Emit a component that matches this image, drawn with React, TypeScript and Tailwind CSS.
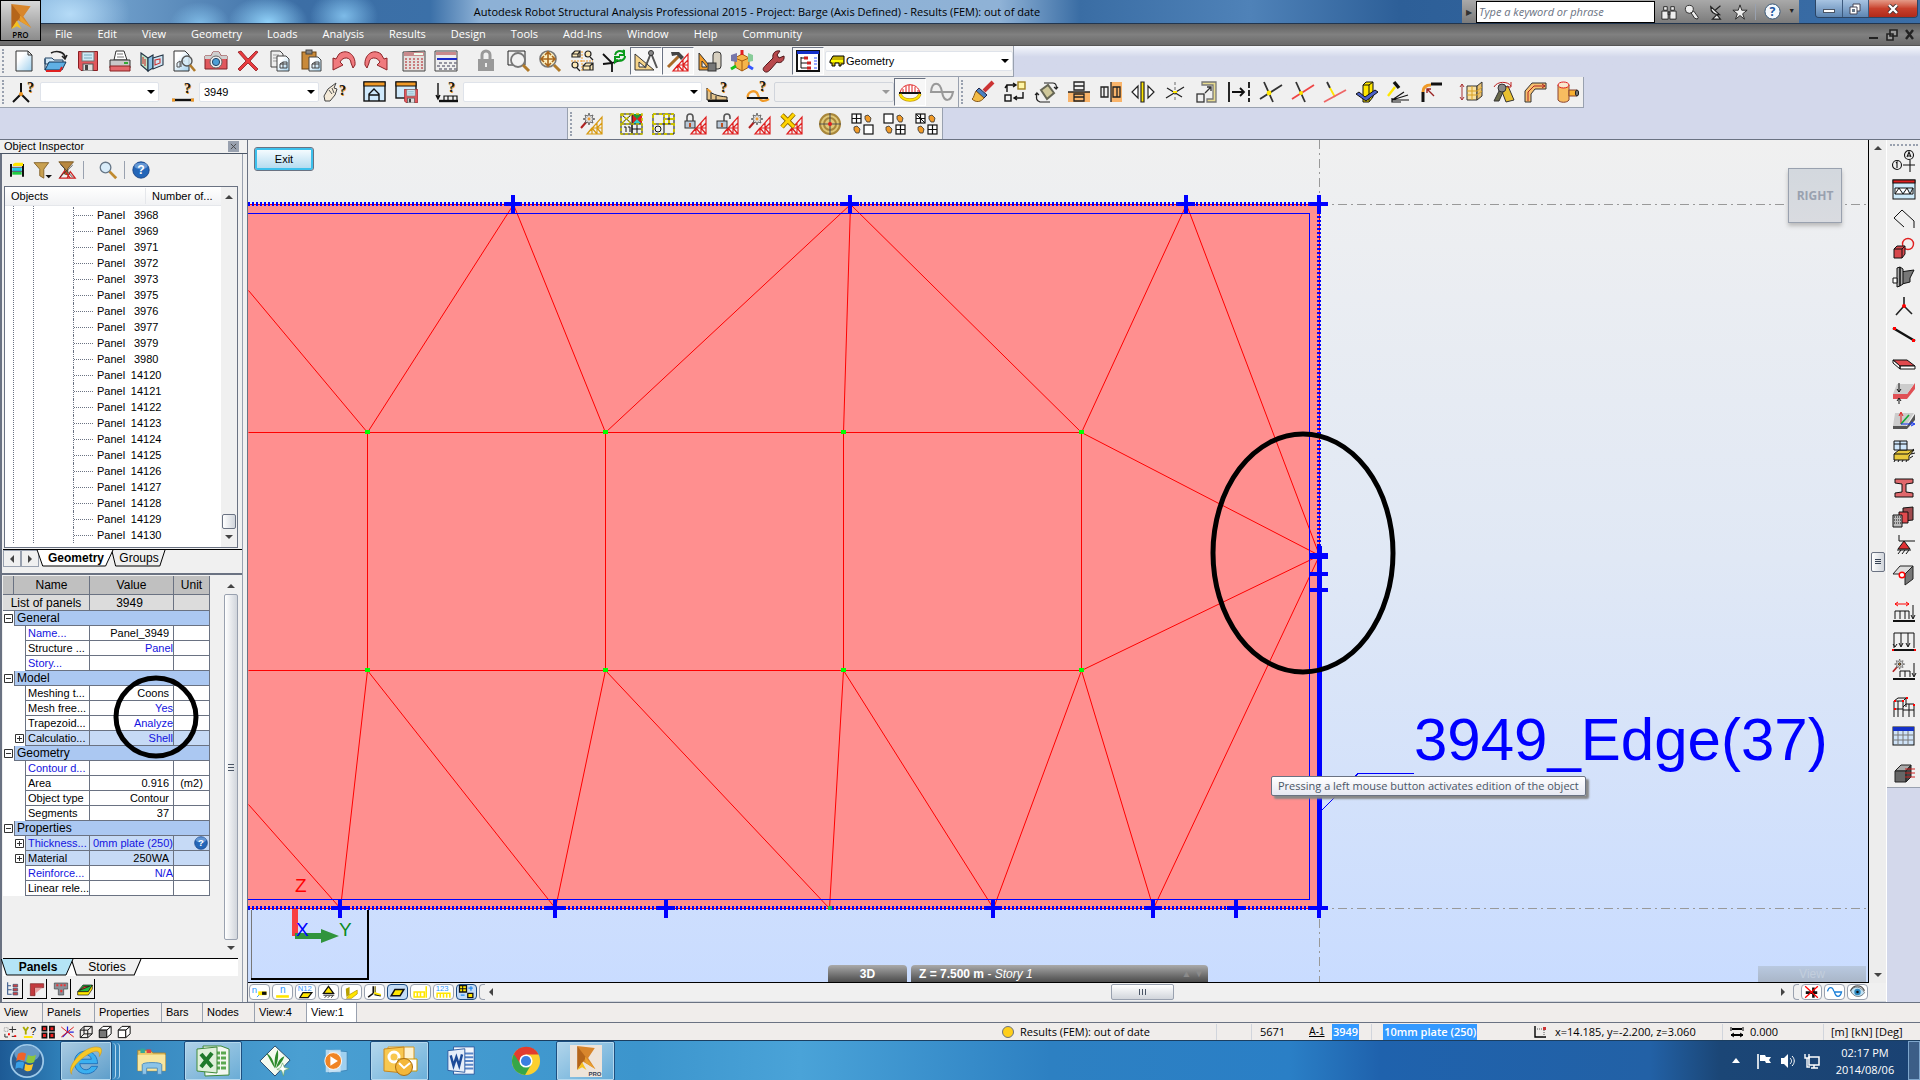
import clsx from "clsx";
import React, { useState } from "react";

const INK = "#111";
const RED = "#e02020";
const YEL = "#ffe600";
const ORG = "#f09a28";

const Tri = ({ c = RED }: { c?: string }) => (
  <path d="M7 21H22V4zM12 21V15H17V21M17 10V15H22M7 21L12 15M17 15L22 10M17 15L22 21M12 15L17 21" fill="none" stroke={c} strokeWidth="1.2" />
);

const Wand = () => (
  <g>
    <path d="M1 15L8 7" stroke="#b02020" strokeWidth="2" />
    <path d="M9 0l1 3 3-1-1 3 3 1-3 1 1 3-3-1-1 3-1-3-3 1 1-3-3-1 3-1-1-3 3 1z" fill="#ddd" stroke="#444" strokeWidth=".7" />
    <circle cx="9" cy="6" r="1.4" fill={ORG} />
  </g>
);

const Quest = ({ x = 16, y = 9 }: { x?: number; y?: number }) => (
  <g>
    <text x={x + 1} y={y + 1} fontSize="14" fontWeight="bold" fontFamily="Liberation Serif, serif" fill={ORG}>?</text>
    <text x={x} y={y} fontSize="14" fontWeight="bold" fontFamily="Liberation Serif, serif" fill={INK}>?</text>
  </g>
);

const Lock = ({ open = false }: { open?: boolean }) => (
  <g>
    <path d={open ? "M8 8V4a3 3 0 0 1 6 0V6" : "M3 9V4a3 3 0 0 1 6 0V9"} fill="none" stroke="#555" strokeWidth="1.6" />
    <rect x="1" y="8" width="10" height="7" fill="#b8c8d8" stroke="#333" />
    <rect x="5" y="10" width="2" height="4" fill="#c05020" />
  </g>
);

const Floppy = ({ x = 2, y = 1, s = 20 }: { x?: number; y?: number; s?: number }) => (
  <svg x={x} y={y} width={s} height={s} viewBox="0 0 20 20">
    <path d="M.5.5h19v19H3L.5 17z" fill="#e2575c" stroke="#8b1d22" />
    <rect x="4" y="1" width="12" height="9" fill="#cfeaf6" stroke="#777" />
    <path d="M6 4h8M6 7h8" stroke="#7ab" />
    <rect x="5" y="13" width="10" height="7" fill="#ddd" stroke="#555" />
    <rect x="7" y="14" width="3" height="5" fill="#444" />
  </svg>
);

const Grid = ({ x, y, fill = "#fff", lines = true }: { x: number; y: number; fill?: string; lines?: boolean }) => (
  <g stroke={INK} strokeWidth="1.2" fill={fill}>
    <rect x={x} y={y} width="9" height="9" />
    {lines && <path d={`M${x + 4.5} ${y}v9M${x} ${y + 4.5}h9`} />}
  </g>
);

const Gem = ({ x, y }: { x: number; y: number }) => (
  <path d={`M${x} ${y}l3 -1 3 3 -1 4 -3 0 -2 -3z`} fill={ORG} stroke="#333" strokeWidth=".8" />
);

const icons: Record<string, React.ReactNode> = {
  new: <path d="M4 1h12l4 4v16H4zM16 1v4h4" fill="url(#paper)" stroke="#333" />,
  open: (
    <g>
      <path d="M1 8h7l2 2h9v4H1z" fill="#cfe6f5" stroke="#246" />
      <path d="M1 20V9M1 20l4-8h17l-4 8z" fill="#5fb0e4" stroke="#135" />
      <path d="M2 21h14l2-4" stroke={RED} strokeWidth="2" fill="none" />
      <path d="M7 3c6-3 14-1 14 5m-3-2l3 3 2-4" fill="none" stroke="#222" strokeWidth="1.6" />
    </g>
  ),
  save: <Floppy />,
  print: (
    <g stroke="#333">
      <path d="M6 10l2-9h8l3 9z" fill="#fff" />
      <path d="M9 4h6M9 7h7" stroke="#777" />
      <path d="M2 10h20v8H2z" fill="#c9c9c9" />
      <path d="M2 16h20v5H2z" fill="#e4686c" stroke="#822" />
      <rect x="16" y="12" width="4" height="2" fill="#3a3" stroke="none" />
    </g>
  ),
  map: (
    <g stroke="#234" strokeWidth="1.1">
      <path d="M1 3l7 5v13l-7-6z" fill="#bfe3c6" />
      <path d="M8 8l5-3v13l-5 3z" fill="#8cc4e8" />
      <path d="M13 8l10-3v10l-10 4z" fill="#cfe6f5" />
      <path d="M15 10l5-1v4l-5 2zM3 7v7M5 9v7" fill="none" stroke="#c33" />
    </g>
  ),
  preview: (
    <g>
      <path d="M2 1h11l4 4v16H2z" fill="url(#paper)" stroke="#333" />
      <path d="M5 17v-4l3-2v6zM9 17v-6h4" fill="none" stroke="#555" />
      <circle cx="15" cy="11" r="5" fill="#d7ecf8" fillOpacity=".8" stroke="#555" strokeWidth="1.4" />
      <path d="M18 15l5 6" stroke="#b07a2a" strokeWidth="2.6" />
    </g>
  ),
  camera: (
    <g>
      <path d="M1 6h6l2-4h6l2 4h6v13H1z" fill="#e0575c" stroke="#7d2226" />
      <path d="M1 6h6l2-4h6l2 4h6v3H1z" fill="#cfcfcf" />
      <circle cx="12" cy="12" r="6" fill="#eee" stroke="#666" />
      <circle cx="12" cy="12" r="3.6" fill="#4d9fd6" stroke="#246" />
    </g>
  ),
  del: <path d="M2 2l3-1 7 8 8-8 2 1-8 9 8 8-2 2-8-8-8 8-2-2 8-8z" fill="#ea3b3f" stroke="#8f1a1e" strokeWidth=".8" />,
  copy: (
    <g stroke="#444">
      <path d="M3 1h9l3 3v13H3z" fill="#eee" />
      <path d="M5 5h6M5 8h6M5 11h6" stroke="#999" />
      <path d="M9 6h9l3 3v12H9z" fill="url(#paper)" />
      <path d="M12 18v-4l3-2h4v6zM12 14h7M15 12v6" fill="none" />
    </g>
  ),
  paste: (
    <g stroke="#444">
      <rect x="2" y="2" width="14" height="17" fill="#c98a3a" stroke="#6b4210" />
      <rect x="6" y="0" width="6" height="4" fill="#888" />
      <path d="M9 7h9l3 3v11H9z" fill="url(#paper)" />
      <path d="M12 18v-4l3-2h4v6zM12 14h7M15 12v6" fill="none" />
    </g>
  ),
  undo: <path d="M21 18l2-3C24 5 15-2 7 4L4 9 1 8l0 12 10-5-3-3c3-6 11-5 11 1z" fill="#f07a7e" stroke="#8d2428" />,
  redo: <path d="M3 18l-2-3C0 5 9-2 17 4l3 5 3-1 0 12-10-5 3-3C13 6 5 7 5 13z" fill="#f07a7e" stroke="#8d2428" />,
  calc: (
    <g>
      <path d="M1 2l22-1v20H1z" fill="#e4e0de" stroke="#444" />
      <rect x="2" y="2" width="20" height="4" fill="#c98a8c" />
      <rect x="12" y="3" width="9" height="2" fill="#efe" />
      <path d="M3 9h18M3 12h18M3 15h18M3 18h18" stroke="#c0595c" strokeWidth="1.6" strokeDasharray="2 2" />
    </g>
  ),
  calc2: (
    <g>
      <path d="M1 1h22v20H1z" fill="#eee" stroke="#444" />
      <rect x="2" y="2" width="20" height="3" fill="#c98a8c" />
      <rect x="3" y="8" width="20" height="2" fill="#1c2bc8" />
      <path d="M5 13h18M3 16h18M5 19h18" stroke="#778" strokeWidth="1.4" strokeDasharray="3 2" />
    </g>
  ),
  lock: (
    <g>
      <path d="M8 10V5a4 4 0 0 1 8 0v5" fill="none" stroke="#999" strokeWidth="3" />
      <rect x="4" y="9" width="16" height="12" fill="#999" />
      <path d="M12 13v4" stroke="#eee" strokeWidth="2" />
    </g>
  ),
  zoom: (
    <g>
      <path d="M2 1h17v14H2z" fill="none" stroke="#222" />
      <circle cx="12" cy="10" r="7" fill="#f2f2f2" stroke="#777" strokeWidth="1.8" />
      <path d="M17 15l6 6" stroke="#b07a2a" strokeWidth="3" />
    </g>
  ),
  pan: (
    <g>
      <circle cx="10" cy="9" r="8" fill="#fdf0c0" stroke="#777" strokeWidth="1.6" />
      <path d="M10 2v14M3 9h14M7 5l3-3 3 3M7 13l3 3 3-3M6 6L3 9l3 3M14 6l3 3-3 3" fill="none" stroke="#a8641a" strokeWidth="1.6" />
      <path d="M16 15l6 6" stroke="#b07a2a" strokeWidth="3" />
    </g>
  ),
  zooms: (
    <g fill="#fde9b8" stroke="#222" strokeWidth="1.2">
      <path d="M2 4l3-3h5v6H2zM2 4h6v3M8 4l2-3" />
      <path d="M13 16l3-3h7v7H13zM13 16h7v4M20 16l3-3" />
      <circle cx="18" cy="4" r="3" /><path d="M20 7l3 3" />
      <circle cx="5" cy="15" r="3" /><path d="M7 18l3 3" />
      <path d="M12 1v20M1 11h22" stroke={ORG} strokeWidth="1" strokeDasharray="2 1" />
    </g>
  ),
  refresh: (
    <g fill="none">
      <path d="M1 4l9 9 9-3M10 13v9M1 14l9-1" stroke={INK} strokeWidth="1.8" />
      <path d="M13 5c1-4 5-5 8-3l1-2v5h-5M23 6c0 4-5 6-8 4l-2 2V7h5" stroke="#0a9b1a" strokeWidth="2" />
    </g>
  ),
  draw: (
    <g>
      <path d="M1 4v16h19zM5 12v5h6z" fill="#f6d48a" stroke="#333" fillRule="evenodd" />
      <path d="M17 3l-6 15M17 3l6 15" stroke="#555" strokeWidth="2" />
      <circle cx="17" cy="3" r="2.5" fill="#888" stroke="#333" />
    </g>
  ),
  hammer: (
    <g>
      <Tri />
      <path d="M2 17L13 6" stroke="#a86a28" strokeWidth="3" />
      <path d="M5 2h8l5 5-3 3-4-5-5 1z" fill="#444" />
    </g>
  ),
  shapes: (
    <g stroke="#333">
      <path d="M1 3v17h14zM4 11v6h5z" fill={ORG} fillRule="evenodd" />
      <rect x="15" y="2" width="8" height="17" rx="3" fill="#d8d0c0" />
      <rect x="10" y="13" width="8" height="8" fill="#777" />
    </g>
  ),
  axes: (
    <g>
      <path d="M5 8l7-4 7 4v9l-7 4-7-4z" fill="#f6b54a" stroke="#a55b10" />
      <path d="M5 8l7 3 7-3M12 11v10" fill="none" stroke="#a55b10" />
      <path d="M12 0v5" stroke={RED} strokeWidth="3" />
      <path d="M1 5l6-2v9l-6-1z" fill="#77a" /><path d="M18 3l5 2v6l-5 1z" fill="#8c9" />
      <path d="M1 19l5-3" stroke="#19c41c" strokeWidth="3" /><path d="M18 16l5 3" stroke="#35f" strokeWidth="3" />
    </g>
  ),
  wrench: <path d="M2 21c-2-2 0-4 2-6l7-7c-1-4 2-8 7-7l-3 4 2 3 5-2c1 5-4 8-7 6l-7 8c-2 2-4 3-6 1z" fill="#b8484c" stroke="#4d1518" />,
  tree: (
    <g>
      <rect x="1" y="1" width="22" height="20" fill="#fff" stroke={INK} strokeWidth="2" />
      <rect x="1" y="1" width="22" height="3" fill="#1430c8" />
      <path d="M5 7v11M5 8h3M5 13h6M5 18h6" fill="none" stroke={INK} />
      <path d="M8 8h4M11 13h4M11 18h4" stroke="#c22" strokeWidth="3" />
      <path d="M18 8h3M18 11h3M18 14h3M18 18h3" stroke="#35f" />
    </g>
  ),
  nodeQ: (
    <g>
      <path d="M9 2v11L1 21M9 13l8 8" fill="none" stroke={INK} strokeWidth="2" />
      <circle cx="9" cy="13" r="2" fill={ORG} />
      <Quest x={15} y={11} />
    </g>
  ),
  barQ: (
    <g>
      <path d="M1 19h22" stroke={INK} strokeWidth="2.4" />
      <path d="M1 19h3M20 19h3" stroke={ORG} strokeWidth="3" />
      <Quest x={13} y={12} />
    </g>
  ),
  handQ: (
    <g>
      <path d="M1 15l4-7 8-6-2 5 3 1-2 6-5 6H2z" fill="#f4ead8" stroke="#444" />
      <path d="M6 9l3 4M9 7l2 5" stroke="#555" />
      <Quest x={16} y={14} />
    </g>
  ),
  window: (
    <g>
      <rect x="1" y="1" width="21" height="19" fill="#cfe9fb" stroke={INK} strokeWidth="1.4" />
      <rect x="1" y="1" width="21" height="4" fill={ORG} stroke={INK} />
      <path d="M6 20v-7l5-5 5 5v7M6 14h10" fill="none" stroke={INK} strokeWidth="1.4" />
    </g>
  ),
  windowSave: (
    <g>
      <rect x="1" y="1" width="20" height="16" fill="#cfe9fb" stroke={INK} strokeWidth="1.4" />
      <rect x="1" y="1" width="20" height="4" fill={ORG} stroke={INK} />
      <Floppy x={9} y={8} s={14} />
    </g>
  ),
  loadQ: (
    <g>
      <path d="M3 2v16M1 14l2 4 2-4" fill="none" stroke={INK} strokeWidth="1.4" />
      <path d="M4 20h19" stroke={INK} strokeWidth="2.4" />
      <path d="M9 19v-4h13v4M13 15v4M18 15v4" fill="none" stroke={INK} strokeWidth="1.2" />
      <Quest x={13} y={11} />
    </g>
  ),
  diagQ: (
    <g>
      <path d="M1 7c3 6 10 8 20 9v3H1z" fill="#e4c48c" stroke="#222" />
      <path d="M5 12v6M10 15v4" stroke="#222" />
      <path d="M2 20h20" stroke={INK} strokeWidth="2" />
      <path d="M1 8l4 3" stroke={ORG} strokeWidth="2" />
      <Quest x={14} y={11} />
    </g>
  ),
  modeQ: (
    <g>
      <path d="M2 17c-2-6 8-10 10-3s6 7 11 4" fill="none" stroke={ORG} strokeWidth="2.4" />
      <path d="M1 17h21" stroke={INK} strokeWidth="2" />
      <Quest x={13} y={10} />
    </g>
  ),
  dome: (
    <g>
      <path d="M2 12c2-11 18-11 20 0z" fill="#fff" stroke="#e02020" />
      <path d="M5 8v4M8 5v7M11 4v8M14 4v8M17 6v6M20 9v3" stroke="#e02020" />
      <path d="M1 12h22" stroke={INK} strokeWidth="2" />
      <path d="M2 13c3 8 17 8 20 0" fill="none" stroke="#c89a10" strokeWidth="3.4" />
      <path d="M2 13c3 8 17 8 20 0" fill="none" stroke={YEL} strokeWidth="2" />
    </g>
  ),
  sine: <path d="M1 11c1-11 9-11 11 0s9 10 11 0v0H1z" fill="none" stroke="#999" strokeWidth="2" />,
  brush: (
    <g>
      <path d="M22 1l-9 9" stroke="#c33" strokeWidth="4" />
      <path d="M8 7l8 7-3 3-8-7z" fill="#4b82c0" stroke="#224" />
      <path d="M5 10l8 7c-3 4-8 5-12 1 2-1 2-5 4-8z" fill="#f2bc48" stroke="#84561a" />
    </g>
  ),
  move: (
    <g fill="none" stroke={INK} strokeWidth="1.4">
      <rect x="15" y="1" width="7" height="7" stroke="#a08020" fill="#fff6a8" />
      <rect x="2" y="14" width="6" height="6" />
      <path d="M4 11V4h8M10 2l3 2-3 2M2 7l2-3M20 11v6h-8M14 15l-3 2 3 2" />
    </g>
  ),
  rotate: (
    <g fill="none" stroke="#222" strokeWidth="1.2">
      <path d="M6 9l7-5 6 8-7 6z" fill="#cfc89a" stroke="#665" strokeWidth="2" />
      <path d="M9 2h9c3 0 4 3 3 6l-2-2M21 8l2-2M15 21H5c-4-1-4-4-3-9l2 2M2 12l-2 2" />
    </g>
  ),
  mirrorV: (
    <g fill="none" stroke="#222" strokeWidth="1.3">
      <rect x="1" y="11" width="22" height="10" fill="#f9b46a" stroke="none" />
      <path d="M7 1h10v8H7zM7 5h10M1 11h22M7 13h10v7H7zM7 16h10" />
    </g>
  ),
  mirrorH: (
    <g fill="none" stroke="#222" strokeWidth="1.3">
      <rect x="12" y="1" width="11" height="20" fill="#f9b46a" stroke="none" />
      <path d="M2 6h7v10H2zM5 6v10M12 1v20M14 6h7v10h-7zM18 6v10" />
    </g>
  ),
  axisSym: (
    <g stroke="#222" strokeWidth="1.2">
      <path d="M7 5v12L1 11zM17 5v12l6-6z" fill="#fff" />
      <path d="M10 1h3v20h-3z" fill={YEL} />
    </g>
  ),
  star: (
    <g stroke="#222" strokeWidth="1.3">
      <path d="M12 1v20" strokeDasharray="3 2" stroke="#888" /><path d="M3 17L21 6M4 7l15 9" />
      <path d="M10 11h4" stroke={YEL} strokeWidth="2" />
    </g>
  ),
  scale: (
    <g fill="none" stroke="#333" strokeWidth="1.3">
      <path d="M7 1h14v20H12V18h6V4H7z" fill="#e8dc90" stroke="#777" />
      <rect x="2" y="13" width="7" height="8" /><path d="M10 12l6-6M12 6h4v4" />
    </g>
  ),
  offset: (
    <g stroke={INK} strokeWidth="1.8" fill="none">
      <path d="M2 1v20" /><path d="M22 1v20" strokeDasharray="6 2" /><path d="M5 11h12M13 7l4 4-4 4" />
    </g>
  ),
  cross: <g strokeWidth="1.8"><path d="M5 1l9 20M1 18L23 4" stroke="#333" /><circle cx="10" cy="12" r="2.4" fill={YEL} /></g>,
  crossR: <g strokeWidth="1.8"><path d="M5 1l9 20" stroke="#333" /><path d="M1 18L23 4" stroke="#e44" /><circle cx="10" cy="12" r="2" fill={YEL} /></g>,
  trim: <g strokeWidth="1.8"><path d="M4 1l3 6" stroke="#333" /><path d="M7 7l5 9" stroke={YEL} /><path d="M1 21L23 9" stroke="#e66" /></g>,
  box3: (
    <g stroke={INK}>
      <path d="M8 4l3-3h7v15l-4 5H8z" fill={YEL} /><path d="M8 4h6v16M14 4l4-3" fill="none" />
      <path d="M1 13l3-2 6 5 10-7 3 2-12 9z" fill="#4a60c8" />
    </g>
  ),
  chamfer: (
    <g stroke={INK} fill="none" strokeWidth="1.2">
      <path d="M7 1l5 6" strokeWidth="3.4" /><path d="M8 6L1 15" stroke={YEL} strokeWidth="2.4" />
      <path d="M5 19l12-8M5 19h17M5 19l16-5M5 17v4h9" />
    </g>
  ),
  fillet: (
    <g fill="none">
      <path d="M4 21v-10" stroke={INK} strokeWidth="3" /><path d="M4 11c0-5 3-7 8-7" stroke={ORG} strokeWidth="3" />
      <path d="M12 3h11" stroke={INK} strokeWidth="3" /><path d="M15 15L8 8M8 12V8h4" stroke="#922" strokeWidth="1.4" />
    </g>
  ),
  extrude: (
    <g stroke="#333">
      <path d="M8 5l10 0v14H8z" fill="#f8e0a0" /><path d="M18 5l5-4v14l-5 4z" fill="#e8c070" />
      <path d="M8 10h10l5-4M8 14h10l5-4M13 5v14" fill="none" stroke="#d8a020" />
      <path d="M3 3v16M1 6l2-3 2 3M1 16l2 3 2-3" fill="none" stroke="#a33" />
    </g>
  ),
  revolve: (
    <g stroke="#333">
      <path d="M10 8l7-3 6 14-8 2z" fill="#e8c030" /><path d="M9 8L3 20h5l5-11z" fill="#6a6a4a" />
      <circle cx="11" cy="7" r="4" fill="#888" /><path d="M3 6c3-6 14-6 17-1M20 1v5h-4" fill="none" stroke="#b22" />
    </g>
  ),
  sweep: (
    <g stroke="#333">
      <path d="M2 21v-11l7-8h14v6h-11l-4 5v8z" fill="#f8c070" /><path d="M5 20v-9l6-6h11M19 3l3 2-3 2" fill="none" stroke="#a22" />
    </g>
  ),
  pipe: (
    <g stroke="#843">
      <path d="M3 4v15c2 3 9 3 11 0V4z" fill="#f8bc60" /><ellipse cx="8.5" cy="4" rx="5.5" ry="3" fill="#f8e8d0" stroke={RED} />
      <path d="M14 9h8v6h-8z" fill="#f8b030" /><ellipse cx="22" cy="12" rx="1.6" ry="3" fill="#777" stroke="#222" />
    </g>
  ),
  meshWand: <g><Tri c="#d89a10" /><Wand /></g>,
  meshColor: (
    <g>
      <path d="M12 1h10v10H12z" fill="#1c9a3a" /><path d="M12 11l5-5 5 5z" fill="#3cc" /><path d="M22 1v10l-5-5zM12 1v10l5-5z" fill={RED} />
      <path d="M1 1h11v20H1zM12 11h10v10H12zM1 11h11M1 1l11 10M12 1L1 11M17 11v10M12 16h10M4 14h2v5M8 14h2v5" fill="none" stroke={INK} />
      <path d="M1 1h21v20H1zM1 11h21M1 1l11 10M12 1L1 11" fill="none" stroke="#c8c000" strokeWidth="1.6" strokeDasharray="3 2" />
    </g>
  ),
  meshGrid: (
    <g fill="none" stroke={INK}>
      <path d="M1 1h21v20H1zM1 11h21M12 1v20M17 1v10M12 6h10" /><circle cx="6" cy="16" r="3" />
      <path d="M1 1h21v20H1zM1 11h21M12 1v10M17 1v10M12 6h10" stroke="#c8c000" strokeWidth="2" strokeDasharray="3 3" />
    </g>
  ),
  meshLock: <g><Tri /><Lock /></g>,
  meshUnlock: <g><Tri /><Lock open /></g>,
  meshWandR: <g><Tri /><Wand /></g>,
  meshDel: <g><Tri /><path d="M2 2l12 12M14 1L2 14" stroke="#8a6500" strokeWidth="4.6" /><path d="M2 2l12 12M14 1L2 14" stroke="#ffd400" strokeWidth="3" /></g>,
  target: (
    <g fill="none" stroke="#a8863a" strokeWidth="2">
      <circle cx="12" cy="11" r="10" fill="#e0c878" /><circle cx="12" cy="11" r="6" />
      <path d="M12 0v22M1 11h22" stroke="#555" strokeWidth="1.2" /><circle cx="12" cy="11" r="2" fill={RED} stroke="none" />
    </g>
  ),
  g1: <g><Grid x={2} y={1} /><Grid x={14} y={12} lines={false} /><Gem x={15} y={3} /><Gem x={4} y={14} /></g>,
  g2: <g><Grid x={2} y={1} lines={false} /><Grid x={14} y={12} /><Gem x={15} y={3} /><Gem x={4} y={14} /></g>,
  g3: <g><Grid x={2} y={1} /><Grid x={14} y={12} /><Gem x={15} y={3} /><Gem x={4} y={14} /><path d="M2 1l9 9" stroke={INK} /></g>,
  // right hand bar
  axisDef: (
    <g fill="none" stroke={INK} strokeWidth="1.1">
      <circle cx="17" cy="5" r="4.5" /><circle cx="5" cy="15" r="4.5" /><path d="M18 10v12M11 15h12M15 7l2-5 2 5M16 6h3M4 13l1-1v6" />
    </g>
  ),
  truss: (
    <g stroke={INK}>
      <rect x="1" y="1" width="22" height="19" fill="#cdeafa" /><rect x="1" y="1" width="22" height="3" fill={RED} />
      <path d="M3 9h18v6H3zM3 15l4-6 4 6 4-6 3 6 3-6" fill="#fff" />
    </g>
  ),
  poly: <path d="M12 19L2 10l8-8 12 11v7" fill="none" stroke={INK} />,
  solid: (
    <g stroke={INK}>
      <circle cx="16" cy="7" r="5.5" fill="none" stroke={RED} strokeWidth="1.4" />
      <path d="M2 12l3-3h8v8l-3 4H2z" fill="#d8484c" /><path d="M2 12h8v9M10 12l3-3" fill="none" />
    </g>
  ),
  beam: <g stroke={INK}><path d="M8 6l14-2-4 8v4l-12 3z" fill="#777" /><path d="M5 2l3-1v19l-3 1zM8 1l3 2v15l-3 2z" fill="#aaa" /><path d="M1 12h4v5H1z" fill="#fff" /></g>,
  node: <g><path d="M12 2v9L4 20M12 11l8 8" fill="none" stroke="#222" strokeWidth="1.6" /><circle cx="12" cy="11" r="2" fill="red" /></g>,
  bar: <g><path d="M1 4l22 13" stroke={INK} strokeWidth="2.4" /><path d="M1 3h3v3H1zM20 15h3v3h-3z" fill="red" /></g>,
  panel: <g stroke={INK}><path d="M1 7h14l8 6H8z" fill="#e04a4e" /><path d="M1 7v3l7 6v-3zM8 13h15v3H8z" fill="#fff" /></g>,
  thick: <g><path d="M1 12h14l8-11v6l-8 10H1z" fill="#e05055" /><path d="M1 12L5 2h17l-7 10z" fill="#ccc" /><path d="M7 1v9M5 7l2 3 2-3M7 22v-5M5 19l2-3 2 3" stroke={INK} fill="none" /></g>,
  local: (
    <g fill="none">
      <path d="M1 15h13l8-13H3z" fill="#ccc" /><path d="M1 15h14l8-12v6l-8 9H1z" fill="#555" />
      <path d="M9 13V2M7 5l2-4 2 4" stroke={RED} /><path d="M9 13l8-9" stroke="#1a3" strokeWidth="1.6" /><path d="M9 13h13M19 11l4 2-4 2" stroke="#13e" />
    </g>
  ),
  support: (
    <g stroke={INK}>
      <path d="M2 14l5-4h15l-5 6v4H2z" fill="#e8c83c" /><path d="M2 14h14l6-5" fill="none" />
      <path d="M2 1h13v9H2zM8 1v9M2 4h13" fill="#cfe6fb" />
      <path d="M2 22l1-2M6 22l1-2M10 22l1-2M14 22l1-2M19 14l4-1M18 18l3-2" />
    </g>
  ),
  ibeam: <path d="M3 2h18v4l-7 1v8l7 1v4H3v-4l7-1V7L3 6z" fill="#e0686c" stroke={INK} />,
  mats: <g stroke={INK}><path d="M11 2l10-1v13l-10 1z" fill="#a04a4e" /><path d="M7 6h9v11H7z" fill="#e04a4e" /><path d="M1 9h9v12H1z" fill="#bbb" /><path d="M2 11h7M2 14h7M2 17h7" strokeDasharray="1 1" /></g>,
  pin: <g><path d="M7 0v6h16" fill="none" stroke={INK} /><path d="M12 6l6 8H6z" fill="#e03034" stroke={INK} /><path d="M5 15h14M6 19l3-4M10 19l3-4M14 19l3-4" stroke={INK} /></g>,
  hinge: <g stroke="#222"><path d="M1 10L8 2h13l-8 8z" fill="#ddd" /><path d="M21 2v13l-8 6V10z" fill="#777" /><circle cx="10" cy="11" r="2.8" fill="#fff" stroke="red" strokeWidth="1.4" /></g>,
  loadCase: <g fill="none" stroke={INK}><path d="M3 3h14M6 1L3 3l3 2M14 1l3 2-3 2" stroke="red" /><path d="M3 18v-8h14v8M8 10v8M13 10v8M21 4v13M19 14l2 4 2-4" /><path d="M1 20h22" strokeWidth="2" /></g>,
  loads: <g fill="none" stroke={INK}><path d="M2 3h20v15M2 3v15M9 3v13M16 3v13M7 13l2 4 2-4M14 13l2 4 2-4M1 14l2 3 2-3" /><path d="M1 20h22" strokeWidth="2" /><path d="M0 20h2M22 20h2" stroke="red" strokeWidth="2" /></g>,
  loadWand: <g fill="none" stroke={INK}><path d="M8 18v-6h10v6M13 12v6M22 4v13M20 14l2 4 2-4" /><path d="M1 20h22" strokeWidth="2" /><g transform="scale(.85)"><Wand /></g></g>,
  frame: <g fill="none" stroke={INK}><path d="M2 21V5l4-3h8v9M2 5h9v16M2 13h9M6 5v16M11 5l3-3M14 8h8v13M14 8l-3 3M11 14h11M17 8v13" /><path d="M2 5h2M10 5h2M14 2h2M22 8v2M2 13h2" stroke="red" strokeWidth="2" /></g>,
  table: <g><rect x="1" y="2" width="21" height="18" fill="#cfe3f8" stroke={INK} /><rect x="1" y="2" width="21" height="4" fill="#1430c8" /><path d="M1 10h21M1 15h21M6 6v14M11 6v14M16 6v14" stroke="#777" /></g>,
  section: <g stroke="#222"><path d="M3 9l6-6h10l-5 6z" fill="#aaa" /><path d="M3 9h11v11H3z" fill="#666" /><path d="M14 9l5-6v12l-5 5z" fill="#444" /><path d="M13 7h10M13 11h10M13 15h10" stroke="#c22" /></g>,
  // inspector
  traffic: <g><path d="M3 2v19M21 2v19" stroke={INK} strokeWidth="3" /><path d="M6 2l3-2h12v5H6z" fill={YEL} /><path d="M5 8h14v5H5z" fill="#2ce" /><path d="M5 14h14v4H5z" fill="#2c4" /><path d="M3 7h18M3 13h18" stroke={INK} /></g>,
  filter: <g><path d="M1 2h18l-6 8v11l-5-3v-8z" fill="#c8a050" stroke="#7a5820" /><path d="M15 17h8l-4 4z" fill={INK} /></g>,
  filterX: <g><path d="M2 1h18l-7 8v8l-4-1V9z" fill="#b88840" stroke="#6a4810" /><path d="M3 21l6-9 7 9zM12 21l4-8 6 8z" fill="none" stroke="#c22" strokeWidth="1.6" /><path d="M4 4l15 16M19 5L3 20" stroke="#333" /></g>,
  find: <g><circle cx="9" cy="8" r="6.5" fill="#d8ecfa" stroke="#678" strokeWidth="1.6" /><path d="M14 13l8 8" stroke="#c08a30" strokeWidth="3.4" /></g>,
  help: <g><circle cx="12" cy="11" r="10" fill="#2466b8" stroke="#123c80" /><ellipse cx="12" cy="6" rx="8" ry="4" fill="#8fb8e8" opacity=".6" /><text x="12" y="16" textAnchor="middle" fontSize="15" fontWeight="bold" fill="#fff">?</text></g>,
  insTree: <g><path d="M4 1v18h6M4 6h5M4 12h6" fill="none" stroke="#358" strokeWidth="1.6" /><path d="M12 4h7v4h-7zM12 10h7v4h-7zM12 16h7v4h-7z" fill="#c44" stroke="#357" /></g>,
  insBeam: <g><path d="M2 3h20v6H9v12H2z" fill="#c23a3e" stroke="#722" /><path d="M9 18L20 9H9z" fill="#e8a0a0" /></g>,
  insCol: <g><path d="M2 2h20v9h-6v9H8v-9H2z" fill="#8a9098" stroke="#444" /><path d="M5 4h3v3H5zM11 4h3v3h-3zM16 4h3v3h-3zM11 12h3v4h-3z" fill="#e33" /></g>,
  insSlab: <g stroke={INK}><path d="M1 15L9 5h14l-6 10z" fill="#2b4" /><path d="M4 13l7-6h8z" fill="#e33" /><path d="M1 15v5h16l6-9V5l-6 10z" fill={YEL} /></g>,
  // view flags
  nBar: <g><text x="0" y="13" fontSize="15" fill="#39f">n</text><path d="M8 19l4-4" stroke="#39f" strokeWidth="1.5" /><path d="M10 13h13" stroke={YEL} strokeWidth="6" /><path d="M16 13h7" stroke={INK} strokeWidth="5" /></g>,
  nLine: <g><text x="8" y="13" fontSize="16" fill="#39f">n</text><path d="M2 18h20" stroke={YEL} strokeWidth="4" /></g>,
  n12: <g><text x="0" y="9" fontSize="12" fill="#39f">N12</text><path d="M3 20l5-8h14l-6 8z" fill={YEL} stroke={INK} strokeWidth="2" /></g>,
  sup: <g><path d="M12 2l8 11H4z" fill={YEL} stroke={INK} strokeWidth="2" /><path d="M4 16h17M6 20l3-3M11 20l3-3M16 20l3-3" stroke={INK} strokeWidth="1.4" /></g>,
  flagF: <g><path d="M3 6l6-3v12l-5 4z" fill="#b8a000" /><path d="M9 15l12-7v6l-9 7H4z" fill={YEL} stroke="#a80" /></g>,
  flagB: <g><path d="M10 2v11M2 19l8-6M12 15l10 2" stroke={INK} strokeWidth="2.4" /><path d="M13 2v10" stroke="#776600" strokeWidth="2" /><path d="M12 11l10 3v3l-11-3z" fill={YEL} /></g>,
  flagP: <path d="M2 17l6-10h14l-6 10z" fill={YEL} stroke={INK} strokeWidth="2.4" />,
  flagL: <g><path d="M2 19v-8h16v8zM7 11v8M12 11v8" fill="none" stroke={YEL} strokeWidth="2.400" /><path d="M21 2v18" stroke={YEL} strokeWidth="2.400" /></g>,
  flag123: <g><text x="0" y="9" fontSize="12" fill="#39f">123</text><path d="M2 20v-7h20v7M7 13v7M12 13v7M17 13v7" fill="none" stroke={YEL} strokeWidth="2.400" /></g>,
  flagG: <g><path d="M1 1h11v10H1z" fill={YEL} stroke={INK} strokeWidth="2" /><path d="M6 1v10M1 6h11" stroke={INK} strokeWidth="1.6" /><path d="M14 13h8v7h-8z" fill={YEL} stroke={INK} strokeWidth="2" /><path d="M15 5h7M19 2v7M3 16h6" stroke="#28e" strokeWidth="2" /></g>,
  noSym: <g><path d="M3 12h18M15 4v16" stroke={INK} strokeWidth="4" /><path d="M2 2l20 18M22 2L2 20" stroke="red" strokeWidth="2" /></g>,
  wave: <g fill="none" stroke="#1a7fd8" strokeWidth="2"><path d="M1 10c2-8 8-8 10 0M12 11h11c-2 9-9 9-11 0z" /></g>,
  eye: <g><path d="M1 9c6-9 17-7 22 3-6 9-17 8-22-3z" fill="#bfe0f4" stroke="#444" /><circle cx="12" cy="11" r="5" fill="#2a88c0" /><circle cx="12" cy="11" r="2" fill={INK} /><path d="M1 9C6-1 18-1 23 9" stroke="#555" fill="none" strokeWidth="2" /></g>,
  // status bar
  s1: <g><path d="M2 4h6v6H2z" fill="none" stroke="#888" strokeDasharray="2 1" /><path d="M15 2v10M10 7h11M3 14v5h5M14 18h7" stroke="#333" fill="none" strokeWidth="1.600" /><path d="M8 13h3v3H8zM18 16h3v3h-3z" fill="red" /></g>,
  s2: <g><path d="M2 3l4 6 4-6M6 9v6" fill="none" stroke="#aa0" strokeWidth="3" /><path d="M3 19h14" stroke={YEL} strokeWidth="3" /><text x="13" y="15" fontSize="17">?</text></g>,
  s3: <g fill="#e22" stroke={INK} strokeWidth="2.400"><path d="M2 2h7v7H2zM14 2h7v7h-7zM2 13h7v7H2zM14 13h7v7h-7z" /></g>,
  s4: <g><path d="M12 2v9l-8 8M12 11h10" stroke="#22d" fill="none" strokeWidth="2" /><path d="M2 3l20 16M22 3L2 19" stroke={RED} strokeWidth="1.6" /></g>,
  s5: <g fill="none" stroke={INK} strokeWidth="1.6"><path d="M2 8h12v12H2zM8 2h13v12H8zM2 8l6-6M14 8l7-6M14 20l7-6M2 20l6-6" /></g>,
  s6: <g stroke={INK} strokeWidth="1.6"><path d="M2 8l6-6h13l-7 6z" fill="#fff" /><path d="M2 8h12v12H2z" fill="#777" /><path d="M14 8l7-6v12l-7 6z" fill="#fff" /></g>,
  s7: <g stroke={INK} strokeWidth="1.6" fill="#fff"><path d="M2 8l6-6h13l-7 6z" /><path d="M2 8h12v12H2z" /><path d="M14 8l7-6v12l-7 6z" /></g>,
};

const Icon = ({ name, className = "h-[22px] w-6" }: { name: string; className?: string }) => (
  <svg viewBox="0 0 24 22" className={clsx("shrink-0 overflow-visible", className)} fontFamily="Liberation Sans, Arial, sans-serif" aria-hidden="true">
    {icons[name]}
  </svg>
);

const Tool = ({ name, pressed }: { name: string; pressed?: boolean }) => (
  <button
    aria-label={name}
    className={clsx(
      "flex h-7 w-8 shrink-0 items-center justify-center border",
      pressed ? "border-t-gray-500 border-l-gray-500 border-r-white border-b-white bg-[#f7f7f7]" : "border-transparent"
    )}
  >
    <Icon name={name} />
  </button>
);

const Tools = ({ names, pressed = [] }: { names: string; pressed?: string[] }) => (
  <div className="flex">
    {names.split(" ").map((n) => (
      <Tool key={n} name={n} pressed={pressed.includes(n)} />
    ))}
  </div>
);

const Combo = ({ label, value, className, disabled, icon }: { label: string; value: string; className: string; disabled?: boolean; icon?: React.ReactNode }) => (
  <div className={clsx("relative h-5 shrink-0", className)}>
    <select
      aria-label={label}
      disabled={disabled}
      className={clsx(
        "block h-5 w-full appearance-none rounded-xs border text-[11px] text-black",
        icon ? "pl-5" : "pl-1",
        disabled ? "border-gray-300 bg-[#f0f0f0]" : "border-[#dfe3ea] bg-white"
      )}
    >
      <option>{value}</option>
    </select>
    {icon && <span className="pointer-events-none absolute top-1 left-1">{icon}</span>}
    <svg viewBox="0 0 8 4" className="pointer-events-none absolute top-2 right-1 h-1 w-2">
      <path d="M0 0h8L4 4z" fill={disabled ? "#999" : "#000"} />
    </svg>
  </div>
);

const Grip = () => <div className="mx-0.5 h-6 w-1 shrink-0 border-l-2 border-dotted border-gray-400" />;

const menus = ["File", "Edit", "View", "Geometry", "Loads", "Analysis", "Results", "Design", "Tools", "Add-Ins", "Window", "Help", "Community"];

const RobotMark = ({ className }: { className: string }) => (
  <svg viewBox="0 0 40 50" preserveAspectRatio="none" className={className} aria-hidden="true">
    <path d="M4 2l32 4-12 19 13 21-22-14z" fill="#d8862c" />
    <path d="M4 2l16 22L4 48z" fill="#b5651a" />
    <path d="M4 48l9-15 8 15-8-5z" fill="#f7c21e" />
    <path d="M18 22l19 24-18-12z" fill="#e9a02e" />
  </svg>
);

const TitleBar = () => (
  <header className="relative flex h-6 shrink-0 items-center justify-end overflow-hidden border-b border-[#22364f] bg-[radial-gradient(ellipse_40px_26px_at_268px_22px,#8fd0f8,transparent),radial-gradient(ellipse_34px_26px_at_344px_16px,#7dbbe8,transparent),radial-gradient(ellipse_30px_22px_at_200px_24px,#7fbbe6,transparent),radial-gradient(ellipse_60px_40px_at_70px_14px,#b5dbf7,transparent),linear-gradient(90deg,#8dbce4_0,#5f8fbe_170px,#3c6ea5_300px,#3b70a8_430px,#8db1d6_480px,#8fb2d6_1000px,#3a6da4_1080px,#4f82b8_1250px,#2d5f98_1400px,#3b6ea7_100%)] font-['Open_Sans','Noto_Sans',sans-serif]">
    <h1 className="absolute inset-x-0 top-1 mr-[406px] text-center text-[11px] leading-4 text-black">
      Autodesk Robot Structural Analysis Professional 2015 - Project: Barge (Axis Defined) - Results (FEM): out of date
    </h1>
    <div className="relative flex h-full w-[337px] items-center bg-gradient-to-b from-[#a9a9a9] to-[#7b7b7b]">
      <span className="flex w-3.5 justify-center text-[8px] text-[#333]">▶</span>
      <input aria-label="Search" placeholder="Type a keyword or phrase" className="h-[22px] w-[179px] border border-black bg-white px-0.5 text-[11px] italic placeholder:text-gray-500" />
      <div className="flex flex-1 items-center justify-around pl-0.5">
        <button aria-label="Search">
          <svg viewBox="0 0 18 18" className="size-4"><path d="M3 3h4v4H3zM11 3h4v4h-4zM1 8h7v9H1zM10 8h7v9h-7zM8 9h2v3H8z" fill="#eee" stroke="#222" /></svg>
        </button>
        <button aria-label="Subscription">
          <svg viewBox="0 0 18 18" className="size-4"><circle cx="6" cy="6" r="4.5" fill="#eee" stroke="#222" /><path d="M8 10l3-2 5 7-1 2-3-1z" fill="#eee" stroke="#222" /></svg>
        </button>
        <button aria-label="Communication">
          <svg viewBox="0 0 18 18" className="size-4"><path d="M3 3c0 6 4 9 10 9zM8 7l6-5M5 17h9l-4-5z" fill="#eee" stroke="#222" strokeWidth="1.3" /></svg>
        </button>
        <button aria-label="Favorites">
          <svg viewBox="0 0 18 18" className="size-4"><path d="M9 1l2 6h6l-5 4 2 6-5-4-5 4 2-6-5-4h6z" fill="#eee" stroke="#222" /></svg>
        </button>
        <span className="h-4 w-px bg-gray-400" />
        <button aria-label="Help">
          <svg viewBox="0 0 18 18" className="size-[17px]"><circle cx="9" cy="9" r="8" fill="#f4f8fc" stroke="#357" /><text x="9" y="14" textAnchor="middle" fontSize="13" fontWeight="bold" fill="#1c56a0">?</text></svg>
        </button>
        <span className="text-[7px] text-[#222]">▼</span>
      </div>
    </div>
    <div className="relative mr-0.5 ml-4 flex h-[18px] w-[103px] self-start overflow-hidden rounded-b border border-t-0 border-[#2c4564] text-white">
      <button aria-label="Minimize" className="flex flex-1 items-end justify-center border-r border-[#3d5a7d] bg-gradient-to-b from-[#a8c4e2] to-[#5d86b3] pb-1"><span className="h-1 w-3 border border-gray-600 bg-white" /></button>
      <button aria-label="Restore" className="flex flex-1 items-center justify-center border-r border-[#3d5a7d] bg-gradient-to-b from-[#a8c4e2] to-[#5d86b3]">
        <svg viewBox="0 0 12 12" className="size-3"><path d="M4 1h7v7H4z" fill="#fff" stroke="#445" /><path d="M1 4h7v7H1z" fill="#fff" stroke="#445" /><path d="M3 6h3v3H3z" fill="#678" /></svg>
      </button>
      <button aria-label="Close" className="flex w-12 items-center justify-center bg-gradient-to-b from-[#e49a88] via-[#c8402c] to-[#b02a1a]">
        <svg viewBox="0 0 12 10" className="h-2.5 w-3"><path d="M2 1l8 8M10 1L2 9" stroke="#433" strokeWidth="4" /><path d="M2 1l8 8M10 1L2 9" stroke="#fff" strokeWidth="2.4" /></svg>
      </button>
    </div>
  </header>
);

const MenuBar = () => (
  <nav className="flex h-[22px] shrink-0 items-center border-b border-[#555] bg-gradient-to-b from-[#5f5f5f] via-[#808080] to-[#6a6a6a] pl-[55px] font-['Open_Sans','Noto_Sans',sans-serif] text-[11px] text-white">
    <div className="flex flex-1 gap-[25px]">
      {menus.map((m) => (
        <button key={m}>{m}</button>
      ))}
    </div>
    <div className="flex items-center gap-1.5 pr-1">
      <button aria-label="Minimize view"><svg viewBox="0 0 12 12" className="size-3"><path d="M1 9h9" stroke="#222" strokeWidth="2" /></svg></button>
      <button aria-label="Restore view"><svg viewBox="0 0 12 12" className="size-3"><path d="M4 1h7v6H4zM1 5h6v6H1z" fill="#999" stroke="#222" strokeWidth="1.6" /></svg></button>
      <button aria-label="Close view"><svg viewBox="0 0 12 12" className="size-3"><path d="M2 1l7 9M9 1L2 10" stroke="#222" strokeWidth="2.4" /></svg></button>
    </div>
  </nav>
);

const Toolbars = () => (
  <div className="shrink-0 bg-[#d3d8eb]">
    <div className="flex h-[31px] bg-gradient-to-b from-[#f4f7fc] to-[#d3d8eb] to-35%">
      <div className="flex items-center border-r border-b border-gray-400 bg-[#f0f0f0]">
        <Grip />
        <Tools names="new open save print map preview camera del copy paste undo redo" />
        <div className="ml-1.5"><Tools names="calc calc2" /></div>
        <div className="ml-2"><Tools names="lock zoom pan zooms refresh draw hammer shapes axes wrench" pressed={["draw", "hammer"]} /></div>
        <span className="w-0.5" />
        <Tool name="tree" pressed />
        <Combo
          label="Layout"
          value="Geometry"
          className="ml-px w-[188px]"
          icon={<svg viewBox="0 0 16 12" className="h-3 w-4"><path d="M1 6l3-5h11v8h-3v2h-2V8H6v3H3V8H1z" fill="#c8b400" stroke="#000" /><path d="M2 6h12" stroke="#ff0" strokeWidth="2" /></svg>}
        />
      </div>
    </div>
    <div className="flex h-[31px]">
      <div className="flex items-center border-r border-b border-gray-400 bg-[#f0f0f0]">
        <Grip />
        <Tool name="nodeQ" />
        <Combo label="Nodes" value="" className="w-[119px]" />
        <span className="w-2" />
        <Tool name="barQ" />
        <Combo label="Bars" value="3949" className="w-[120px]" />
        <Tool name="handQ" />
        <div className="ml-2"><Tools names="window windowSave" /></div>
        <span className="w-2" />
        <Tool name="loadQ" />
        <Combo label="Cases" value="" className="w-[239px]" />
        <Tool name="diagQ" />
        <span className="w-2" />
        <Tool name="modeQ" />
        <Combo label="Modes" value="" className="w-[120px]" disabled />
        <Tools names="dome sine" pressed={["dome"]} />
        <span className="h-full border-r border-gray-400" />
        <Grip />
        <Tools names="brush move rotate mirrorV mirrorH axisSym star scale offset cross crossR trim box3 chamfer fillet" />
        <div className="ml-2"><Tools names="extrude revolve sweep pipe" /></div>
      </div>
    </div>
    <div className="flex h-8 border-b border-gray-500 pl-[567px]">
      <div className="flex items-center border-x border-gray-400 bg-[#f0f0f0]">
        <Grip />
        <Tool name="meshWand" />
        <div className="ml-2"><Tools names="meshColor meshGrid meshLock meshUnlock meshWandR meshDel" /></div>
        <div className="ml-1.5"><Tools names="target g1 g2 g3" /></div>
      </div>
    </div>
  </div>
);

const Arrow = ({ dir }: { dir: "up" | "down" | "left" | "right" }) => (
  <svg viewBox="0 0 8 8" className={clsx("size-2 shrink-0", dir === "down" && "rotate-180", dir === "left" && "-rotate-90", dir === "right" && "rotate-90")}>
    <path d="M4 2l4 4H0z" fill="#444" />
  </svg>
);

const SlantTab = ({ children, active, tint, className, onClick }: { children: React.ReactNode; active?: boolean; tint?: string; className: string; onClick?: () => void }) => (
  <button onClick={onClick} className={clsx("relative h-4 text-[12px] leading-4 text-black", active && "z-10 font-bold", className)}>
    <svg viewBox="0 0 80 16" preserveAspectRatio="none" className="absolute inset-0 h-full w-full overflow-visible">
      <path d="M-2 0L4 16H72L80 0" fill={active ? tint ?? "#fff" : "#f0f0f0"} stroke="#000" vectorEffect="non-scaling-stroke" />
    </svg>
    <span className="relative">{children}</span>
  </button>
);

const panels = [3968, 3969, 3971, 3972, 3973, 3975, 3976, 3977, 3979, 3980, 14120, 14121, 14122, 14123, 14124, 14125, 14126, 14127, 14128, 14129, 14130];

type Row = { name: string; value?: string; unit?: string; section?: boolean; plus?: boolean; link?: boolean; blueValue?: boolean; shade?: boolean };

const rows: Row[] = [
  { name: "General", section: true },
  { name: "Name...", value: "Panel_3949", link: true },
  { name: "Structure ...", value: "Panel", blueValue: true },
  { name: "Story...", link: true },
  { name: "Model", section: true },
  { name: "Meshing t...", value: "Coons" },
  { name: "Mesh free...", value: "Yes", blueValue: true },
  { name: "Trapezoid...", value: "Analyze", blueValue: true },
  { name: "Calculatio...", value: "Shell", blueValue: true, plus: true, shade: true },
  { name: "Geometry", section: true },
  { name: "Contour d...", link: true },
  { name: "Area", value: "0.916", unit: "(m2)" },
  { name: "Object type", value: "Contour" },
  { name: "Segments", value: "37" },
  { name: "Properties", section: true },
  { name: "Thickness...", value: "0mm plate (250)", unit: "?", link: true, blueValue: true, plus: true, shade: true },
  { name: "Material", value: "250WA", plus: true, shade: true },
  { name: "Reinforce...", value: "N/A", link: true, blueValue: true },
  { name: "Linear rele..." },
];

const Expander = ({ plus }: { plus?: boolean }) => (
  <svg viewBox="0 0 9 9" className="mx-auto block size-[9px]">
    <path d="M.5.5h8v8h-8zM2 4.5h5" fill="#fff" stroke="#333" />
    {plus && <path d="M4.5 2v5" stroke="#333" />}
  </svg>
);

const PropertyGrid = () => (
  <table className="w-[207px] table-fixed border-separate border-spacing-0 self-start bg-white text-[11px] leading-[14px] whitespace-nowrap">
    <colgroup>
      <col className="w-[11px]" />
      <col className="w-3" />
      <col className="w-16" />
      <col className="w-[84px]" />
      <col className="w-9" />
    </colgroup>
    <thead>
      <tr className="h-[19px] bg-[#c0c0c0] text-[12px]">
        <th className="border-r border-b border-gray-500 p-0" />
        <th colSpan={2} className="border-r border-b border-gray-500 p-0 font-normal">Name</th>
        <th className="border-r border-b border-gray-500 p-0 font-normal">Value</th>
        <th className="border-r border-b border-gray-500 p-0 font-normal">Unit</th>
      </tr>
    </thead>
    <tbody>
      <tr className="h-4 bg-[#dcdcdc] text-center text-[12px]">
        <td colSpan={3} className="border-r border-b border-gray-500 p-0">List of panels</td>
        <td className="border-r border-b border-gray-500 p-0 pr-1">3949</td>
        <td className="border-r border-b border-gray-500 p-0" />
      </tr>
      {rows.map((r) =>
        r.section ? (
          <tr key={r.name} className="h-[15px]">
            <td className="p-0"><Expander /></td>
            <td colSpan={4} className="border-r border-b border-l border-gray-500 bg-[#abc8f2] p-0 pl-0.5 text-[12px]">{r.name}</td>
          </tr>
        ) : (
          <tr key={r.name} className="h-[15px]">
            <td className="p-0" />
            <td className="border-r border-gray-500 p-0">{r.plus && <Expander plus />}</td>
            <td className={clsx("overflow-hidden border-r border-b border-gray-500 p-0 pl-0.5", r.shade && "bg-[#c6daf6]", r.link && "text-[#1414e0]")}>{r.name}</td>
            <td className={clsx("overflow-hidden border-r border-b border-gray-500 p-0 text-right", r.shade && "bg-[#c6daf6]", r.blueValue ? "text-[#1414e0]" : "pr-1")}>{r.value}</td>
            <td className={clsx("border-r border-b border-gray-500 p-0 text-center", r.shade && "bg-[#c6daf6]")}>
              {r.unit === "?" ? <Icon name="help" className="ml-auto h-3.5 w-4" /> : r.unit}
            </td>
          </tr>
        )
      )}
    </tbody>
  </table>
);

const Inspector = () => {
  const [tab, setTab] = useState("Geometry");

  return (
    <aside className="flex w-[248px] shrink-0 flex-col border-r border-gray-500 bg-[#f0f0f0]">
      <div className="flex h-3.5 items-center justify-between border-b border-gray-600 pr-2 pl-1 text-[11px]">
        <h2>Object Inspector</h2>
        <button aria-label="Close inspector" className="flex size-[11px] items-center justify-center bg-gray-400">
          <svg viewBox="0 0 8 8" className="size-[7px]"><path d="M1 1l6 6M7 1L1 7" stroke="#444" /></svg>
        </button>
      </div>
      <div className="mr-1 flex flex-1 flex-col border-r border-r-gray-400 border-l-2 border-l-gray-500 pl-px">
        <div className="flex h-8 items-center pl-1.5">
          <button aria-label="Levels" className="mr-2"><Icon name="traffic" className="h-4 w-4" /></button>
          <button aria-label="Filter" className="mr-1"><Icon name="filter" className="h-[18px] w-5" /></button>
          <button aria-label="Clear filter"><Icon name="filterX" className="h-[18px] w-5" /></button>
          <span className="mr-3.5 ml-1.5 h-[18px] w-px bg-gray-400" />
          <button aria-label="Find"><Icon name="find" className="h-[18px] w-5" /></button>
          <span className="mx-1.5 h-[18px] w-px bg-gray-400" />
          <button aria-label="Help"><Icon name="help" className="h-[18px] w-5" /></button>
        </div>
        <div className="mr-1 ml-px flex h-[362px] border border-gray-500 bg-white text-[11px]">
          <div className="flex-1">
            <div className="flex h-[19px] items-center border-b border-gray-200 bg-gradient-to-b from-white to-[#f1f2f4]">
              <span className="w-[141px] border-r border-gray-200 pl-1.5">Objects</span>
              <span className="pl-1.5">Number of...</span>
            </div>
            <ul className="relative pt-px">
              <span className="absolute inset-y-0 left-2 border-l border-dotted border-gray-500" />
              <span className="absolute inset-y-0 left-7 border-l border-dotted border-gray-500" />
              {panels.map((p) => (
                <li key={p} className="ml-[68px] flex h-4 items-center border-l border-dotted border-gray-500 leading-4">
                  <span className="mr-1 w-[19px] border-t border-dotted border-gray-500" />
                  <span>Panel</span>
                  <span className="w-[42px] text-center">{p}</span>
                </li>
              ))}
            </ul>
          </div>
          <div className="flex w-4 flex-col items-center justify-between bg-[#f0f0f0] py-1.5">
            <Arrow dir="up" />
            <div className="mt-auto mb-1 h-[15px] w-3.5 rounded-xs border border-gray-500 bg-gradient-to-r from-white to-gray-300" />
            <Arrow dir="down" />
          </div>
        </div>
        <div className="mt-px flex h-[18px] border-t border-black">
          <button aria-label="Previous tab" className="flex w-[18px] items-center justify-center border border-gray-400"><Arrow dir="left" /></button>
          <button aria-label="Next tab" className="flex w-[18px] items-center justify-center border border-gray-400"><Arrow dir="right" /></button>
          <SlantTab className="w-[74px]" active={tab === "Geometry"} onClick={() => setTab("Geometry")}>Geometry</SlantTab>
          <SlantTab className="w-[52px]" active={tab === "Groups"} onClick={() => setTab("Groups")}>Groups</SlantTab>
        </div>
        <div className="mt-1 -ml-1 h-1 border-b-2 border-gray-500" />
        <div className="relative flex flex-1 pt-px">
          <PropertyGrid />
          <div className="mr-1 ml-auto flex w-3.5 flex-col items-center gap-1 py-1.5">
            <Arrow dir="up" />
            <div className="flex w-3.5 flex-1 flex-col items-center justify-center gap-0.5 rounded-xs border border-gray-400 bg-gradient-to-r from-white to-gray-300">
              <i className="h-px w-1.5 bg-gray-600" />
              <i className="h-px w-1.5 bg-gray-600" />
              <i className="h-px w-1.5 bg-gray-600" />
            </div>
            <Arrow dir="down" />
          </div>
          <svg viewBox="0 0 86 84" className="pointer-events-none absolute top-[100px] left-[110px] h-[84px] w-[86px]">
            <ellipse cx="43" cy="42" rx="40" ry="39" fill="none" stroke="#000" strokeWidth="5" />
          </svg>
        </div>
        <div className="mr-1 flex h-[18px] border-t border-black bg-white">
          <SlantTab className="w-[70px]" active tint="#b4e4f6">Panels</SlantTab>
          <SlantTab className="w-[68px]">Stories</SlantTab>
        </div>
        <div className="flex h-[26px] items-center gap-1">
          {["insTree", "insBeam", "insCol", "insSlab"].map((n) => (
            <button key={n} aria-label={n} className="flex h-5 w-5 items-center justify-center border-r border-b border-black">
              <Icon name={n} className="h-4 w-4" />
            </button>
          ))}
        </div>
      </div>
    </aside>
  );
};

const mesh = [
  [248, 432, 1081, 432], [248, 670, 1081, 670],
  [367, 432, 367, 670], [605, 432, 605, 670], [843, 432, 843, 670], [1081, 432, 1081, 670],
  [248, 290, 367, 432], [367, 432, 513, 204], [513, 204, 605, 432], [605, 432, 850, 204], [850, 204, 843, 432],
  [850, 204, 1081, 432], [1081, 432, 1186, 204], [1186, 204, 1319, 555], [1081, 432, 1319, 555], [1081, 670, 1319, 555],
  [1319, 555, 1153, 908], [248, 804, 340, 908], [340, 908, 367, 670], [367, 670, 555, 908], [605, 670, 555, 908],
  [605, 670, 829, 908], [829, 908, 843, 670], [843, 670, 993, 908], [993, 908, 1081, 670], [1081, 670, 1153, 908],
];

const topMarks = [513, 850, 1186, 1319];
const bottomMarks = [340, 555, 666, 993, 1153, 1236, 1319];

const Model = () => (
  <svg viewBox="248 140 1620 842" className="absolute inset-0 h-full w-full" shapeRendering="crispEdges" fontFamily="Liberation Sans, Arial, sans-serif">
    <g stroke="#999" strokeDasharray="9 4 2 4" fill="none">
      <path d="M1319.5 140V982M1319 204.500H1868M1319 908.500H1868" />
    </g>
    <rect x="248" y="204" width="1071" height="704" fill="#ff8f8f" />
    <g stroke="#f00" shapeRendering="auto">
      {mesh.map(([x1, y1, x2, y2]) => (
        <line key={`${x1}-${y1}-${x2}-${y2}`} x1={x1 + 0.5} y1={y1 + 0.5} x2={x2 + 0.5} y2={y2 + 0.5} />
      ))}
    </g>
    <path d="M248 213.500H1309.500V899.500H248" fill="none" stroke="#00f" />
    <path d="M248 204.500H1319M248 908.500H1319M1319.500 204V555" stroke="#f00" />
    <g fill="none" stroke="#00f" strokeWidth="4">
      <path d="M248 204H1319M248 908H1319M1319 204V548" strokeDasharray="2 2" />
      <path d="M1319 546V908" strokeWidth="5" />
      {topMarks.map((x) => <path key={x} d={`M${x - 9} 204H${x + 9}M${x} 195V213`} />)}
      {bottomMarks.map((x) => <path key={x} d={`M${x - 9} 908H${x + 9}M${x} 899V918`} />)}
      <path d="M1309 556H1328" strokeWidth="6" />
      <path d="M1309 574H1328M1309 590H1328" />
    </g>
    {[367, 605, 843, 1081].map((x) => (
      <g key={x} fill="#0f0">
        <rect x={x - 2} y="430" width="5" height="4" />
        <rect x={x - 2} y="668" width="5" height="4" />
      </g>
    ))}
    <rect x="828" y="906" width="4" height="4" fill="#2a6" />
    <path d="M1322 810L1358 773.500H1414" fill="none" stroke="#00f" />
    <text x="1414" y="760" fontSize="60" fill="#00f">3949_Edge(37)</text>
    <ellipse cx="1303" cy="553" rx="90" ry="119" fill="none" stroke="#000" strokeWidth="5" shapeRendering="auto" />
    <path d="M251.500 910V979" stroke="#777" /><path d="M251 979H368V910" fill="none" stroke="#000" strokeWidth="2" />
    <path d="M292 909h6v27h-6z" fill="#f84040" />
    <path d="M295 933h26v-4l18 7-18 7v-4h-26z" fill="#30943c" shapeRendering="auto" />
    <g fontSize="19">
      <text x="295" y="892" fill="#f00">Z</text>
      <text x="296" y="936" fill="#00f">X</text>
      <text x="339" y="936" fill="#0a8a1a">Y</text>
    </g>
  </svg>
);

const Flag = ({ name, on }: { name: string; on?: boolean }) => (
  <button aria-label={name} className={clsx("flex h-4 w-[21px] items-center justify-center rounded-sm border", on ? "border-[#1c4a80] bg-[#c4dcf6]" : "border-gray-400 bg-white")}>
    <Icon name={name} className="h-3.5 w-[17px]" />
  </button>
);

const Viewport = () => (
  <section className="flex min-w-0 flex-1 flex-col bg-[#f0f0f0]">
    <div className="flex min-h-0 flex-1">
      <div className="relative min-w-0 flex-1 overflow-hidden border-r border-b border-black bg-gradient-to-b from-[#f0f0f0] via-[#e0e8f5] to-[#c9dcff]">
        <Model />
        <button className="absolute top-2 left-[7px] h-[22px] w-[58px] rounded-xs border-2 border-[#3cc0ec] bg-gradient-to-b from-[#f4fbfe] to-[#b5dcf0] text-[11px] leading-4 outline outline-gray-500">Exit</button>
        <div className="absolute top-7 right-[26px] flex h-[55px] w-[54px] items-center justify-center border border-gray-400 bg-gradient-to-b from-[#d3d8de] to-[#d9dbe0] font-['Open_Sans',sans-serif] text-[12px] font-bold text-gray-400 shadow-[0_3px_4px_#bbbbbb]">RIGHT</div>
        <div role="tooltip" className="absolute top-[636px] left-[1023px] h-5 rounded-xs border border-gray-500 bg-gradient-to-b from-white to-[#e6e8f2] px-1.5 font-['Open_Sans',sans-serif] text-[11px] leading-[18px] whitespace-nowrap text-gray-600 shadow-[3px_3px_2px_#888888]">
          Pressing a left mouse button activates edition of the object
        </div>
        <div className="absolute bottom-0 left-[580px] flex h-[17px] gap-1 text-[12px] font-bold text-white">
          <button className="w-[79px] rounded-t bg-gradient-to-b from-[#aaa] to-[#4d4d4d]">3D</button>
          <button className="flex w-[297px] items-center rounded-t bg-gradient-to-b from-[#aaa] to-[#4d4d4d] pl-2">
            <span className="flex-1 text-left">Z = 7.500 m <span className="font-normal">- <i>Story 1</i></span></span>
            <span className="pr-1 text-[10px] text-[#8a8a8a]">▲ ▼</span>
          </button>
        </div>
        <button className="absolute right-0.5 bottom-0 h-4 w-[108px] bg-gradient-to-b from-[#b9c9e0] to-[#a9b6c8] text-[12px] leading-4 text-[#c2cedd]">View</button>
      </div>
      <div className="flex w-[17px] flex-col items-center justify-between bg-[#ededed] py-1">
        <Arrow dir="up" />
        <div className="flex h-5 w-3.5 flex-col items-center justify-center gap-px rounded-xs border border-gray-500 bg-gradient-to-r from-white to-gray-300">
          <i className="h-px w-1.5 bg-gray-700" />
          <i className="h-px w-1.5 bg-gray-700" />
          <i className="h-px w-1.5 bg-gray-700" />
        </div>
        <Arrow dir="down" />
      </div>
    </div>
    <div className="flex h-[19px] shrink-0 items-center gap-0.5 border-b border-gray-300 pl-px">
      {["nBar", "nLine", "n12", "sup", "flagF", "flagB", "flagP", "flagL", "flag123", "flagG"].map((n) => (
        <Flag key={n} name={n} on={n === "flagP" || n === "flagG"} />
      ))}
      <span className="h-4 w-1.5 rounded-l border border-r-0 border-gray-400" />
      <Arrow dir="left" />
      <div className="relative h-4 flex-1">
        <div className="absolute inset-y-0 left-[48%] flex w-[63px] items-center justify-center gap-0.5 rounded-xs border border-gray-400 bg-gradient-to-b from-white to-gray-300">
          <i className="h-1.5 w-px bg-gray-600" />
          <i className="h-1.5 w-px bg-gray-600" />
          <i className="h-1.5 w-px bg-gray-600" />
        </div>
      </div>
      <Arrow dir="right" />
      <span className="ml-1 h-4 w-1.5 rounded-l border border-r-0 border-gray-400" />
      <Flag name="noSym" />
      <Flag name="wave" />
      <Flag name="eye" />
      <span className="w-4" />
    </div>
  </section>
);

const SideTools = () => {
  const groups = [
    "axisDef truss poly solid beam node bar panel thick local support",
    "ibeam mats pin hinge",
    "loadCase loads loadWand",
    "frame table",
    "section",
  ];

  return (
    <div className="w-[34px] shrink-0 border-l border-white bg-[#d3d8eb]">
      <div className="border-b border-gray-400 bg-[#f0f0f0] pt-1">
        <div className="mx-auto w-7 border-t-2 border-dotted border-gray-400" />
        <div className="flex flex-col items-center gap-2">
          {groups.map((g) => (
            <div key={g} className="flex flex-col">
              {g.split(" ").map((n) => (
                <button key={n} aria-label={n} className="flex h-[29px] items-center justify-center">
                  <Icon name={n} />
                </button>
              ))}
            </div>
          ))}
        </div>
      </div>
    </div>
  );
};

const DocTabs = () => {
  const [active, setActive] = useState("View:1");
  const tabs = [
    ["View", "w-[43px]"],
    ["Panels", "w-[52px]"],
    ["Properties", "w-[67px]"],
    ["Bars", "w-[41px]"],
    ["Nodes", "w-[52px]"],
    ["View:4", "w-[52px]"],
    ["View:1", "w-[50px]"],
  ];

  return (
    <div className="flex h-5 shrink-0 border-t border-gray-500 bg-[#f0edeb] text-[11px]">
      {tabs.map(([t, w]) => (
        <button key={t} onClick={() => setActive(t)} className={clsx("border-r border-gray-400 pb-px pl-1 text-left", w, active === t && "bg-white")}>
          {t}
        </button>
      ))}
    </div>
  );
};

const StatusBar = () => (
  <footer className="flex h-[18px] shrink-0 items-center border-t border-gray-500 bg-[#f0edeb] font-['Open_Sans','Noto_Sans',sans-serif] text-[11px] leading-4 whitespace-nowrap">
    <div className="flex w-[1002px] items-center gap-1 pl-[3px]">
      {["s1", "s2", "s3", "s4", "s5", "s6", "s7"].map((n) => (
        <Icon key={n} name={n} className="h-3.5 w-[15px]" />
      ))}
    </div>
    <span className="mr-1.5 size-3 rounded-full border border-gray-500 bg-[#ffcf1a]" />
    <span className="w-[196px]">Results (FEM): out of date</span>
    <span className="h-4 w-9 border-x border-gray-300" />
    <span className="w-[57px] pl-2">5671</span>
    <span className="w-[23px] font-['Liberation_Sans'] text-[10px] leading-3 underline">A-1</span>
    <b className="bg-[#3399ff] px-px font-semibold text-white">3949</b>
    <span className="ml-3 h-4 w-3 border-l border-gray-300" />
    <b className="bg-[#3399ff] px-px font-semibold text-white">10mm plate (250)</b>
    <div className="ml-auto flex items-center">
      <svg viewBox="0 0 14 14" className="mr-2 size-3.5"><path d="M2 1v11h11" fill="none" stroke="#000" strokeWidth="1.4" /><path d="M4 4h7v8" fill="none" stroke="#555" strokeDasharray="1 1" /><path d="M10 2h3v3h-3z" fill="#c33" /></svg>
      <span className="w-[167px]">x=14.185, y=-2.200, z=3.060</span>
      <span className="h-4 w-2 border-l border-gray-300" />
      <svg viewBox="0 0 14 14" className="mr-1.5 size-3.5"><path d="M2 4h10M1 10h12" stroke="#000" strokeWidth="2" /><path d="M1 2v4M13 2v4M4 8l-3 2 3 2M10 8l3 2-3 2" fill="none" stroke="#000" /></svg>
      <span className="w-[73px]">0.000</span>
      <span className="h-4 w-2 border-l border-gray-300" />
      <span className="w-[89px]">[m] [kN] [Deg]</span>
    </div>
  </footer>
);

const Task = ({ label, open, className, children }: { label: string; open?: boolean; className: string; children: React.ReactNode }) => (
  <button
    aria-label={label}
    className={clsx(
      "flex h-10 shrink-0 items-center justify-center rounded-xs",
      open && "border border-[#1d4f80] bg-gradient-to-br from-white/60 to-white/20 shadow-[inset_0_0_0_1px_#b4d8ee]",
      className
    )}
  >
    {children}
  </button>
);

const Taskbar = () => (
  <div className="flex h-10 shrink-0 items-center border-t border-[#1b3e60] bg-[linear-gradient(90deg,#1d5a95_0,#2f7fb8_60px,#4a9fd2_300px,#3c95cd_640px,#4aa3d8_800px,#2d80c2_1050px,#2a7fc6_1290px,#1f62ad_1380px,#2261a6_1650px,#1b4676_1720px,#1a4273_100%)]">
    <Task label="Start" className="w-[54px]">
      <svg viewBox="0 0 40 40" className="size-9">
        <circle cx="20" cy="20" r="18" fill="#2a5f94" stroke="#9cc8e8" strokeWidth="2" />
        <ellipse cx="20" cy="12" rx="14" ry="9" fill="#7fb0d8" opacity=".7" />
        <path d="M10 12c4-2 6-2 9 0l-2 8c-3-2-6-2-9 0z" fill="#f0632a" />
        <path d="M21 13c3 2 6 2 9 0l-2 8c-3 2-6 2-9 0z" fill="#8cc63e" />
        <path d="M8 22c3-2 6-2 9 0l-2 7c-3-2-5-2-8 0z" fill="#38a0e8" />
        <path d="M18 23c3 2 6 2 9 0l-2 7c-3 2-5 2-8 0z" fill="#fdc62a" />
      </svg>
    </Task>
    <Task label="Internet Explorer" open className="ml-1.5 w-[52px]">
      <svg viewBox="0 0 40 36" className="h-8 w-9">
        <path d="M33 21H13c1 8 10 9 13 3h7C29 36 7 36 7 19 7 3 33 2 33 21zM13 16h13c-1-7-12-7-13 0z" fill="#3ab0f0" stroke="#1c6cb8" />
        <path d="M4 33C-4 25 20-3 36 3c3 2 1 7-1 10 1-6-2-8-10-4C12 16 2 28 4 33z" fill="#f8c826" stroke="#c8921a" strokeWidth=".6" />
      </svg>
    </Task>
    <span className="h-9 w-1 rounded-r border-r border-[#b4d8ee]" />
    <span className="h-9 w-1 rounded-r border-r border-[#b4d8ee]" />
    <Task label="Explorer" className="w-[64px]">
      <svg viewBox="0 0 36 32" className="h-8 w-8">
        <path d="M2 4h14l3 3h14v20H2z" fill="#e8c868" stroke="#a98430" />
        <path d="M5 2h5v5H5z" fill="#3a9" /><path d="M12 3h5v4h-5z" fill="#d44" /><path d="M2 9h31v18H2z" fill="#f8e6a0" />
        <path d="M7 31V20c0-3 22-3 22 0v11h-5v-7H12v7z" fill="#8cc4e8" stroke="#4a88b8" />
      </svg>
    </Task>
    <Task label="Excel" open className="w-[58px]">
      <svg viewBox="0 0 36 32" className="h-8 w-9">
        <path d="M8 1h18l8 3v26l-24 1z" fill="#f2f8f0" stroke="#3f8a3a" />
        <path d="M20 8h11M20 13h11M20 18h11M20 23h11" stroke="#5aa850" strokeWidth="3" strokeDasharray="5 1" />
        <path d="M2 4l20-2v26L2 26z" fill="#dff0da" stroke="#3f8a3a" /><path d="M6 9l11 13M17 8L6 22" stroke="#1f7a2c" strokeWidth="4" />
      </svg>
    </Task>
    <Task label="Grass" className="w-[66px]">
      <svg viewBox="0 0 34 32" className="h-8 w-8">
        <path d="M17 0l16 15-16 17L1 16z" fill="#f4faf0" stroke="#246" />
        <path d="M17 24C16 16 12 9 8 8c3 5 5 10 9 16zM17 24c-1-9 0-15 3-20 1 8 0 13-3 20zM18 24c2-7 4-11 9-13-2 6-5 9-9 13z" fill="#2d8a2c" />
        <path d="M25 18l2 5 5 1-5 2-1 6-2-6-5-1 4-2z" fill="#fff" stroke="#6a6" strokeWidth=".7" />
      </svg>
    </Task>
    <Task label="Media Player" className="w-14">
      <svg viewBox="0 0 30 30" className="size-7">
        <path d="M7 3l20 2v20l-20 3z" fill="#9fd0f0" stroke="#3d86b8" /><path d="M4 3h16v24H4z" fill="#cfe6f6" opacity=".8" />
        <circle cx="12" cy="15" r="9" fill="#f08424" stroke="#fff" /><path d="M9 10l8 5-8 5z" fill="#fff" />
      </svg>
    </Task>
    <Task label="Outlook" open className="ml-1.5 w-[59px]">
      <svg viewBox="0 0 36 32" className="h-8 w-9">
        <path d="M6 2l26 0v20H6z" fill="#fdf2d0" stroke="#d89a20" /><path d="M2 4l20-2v26L2 26z" fill="#f8c850" stroke="#c8861a" />
        <circle cx="12" cy="12" r="5" fill="none" stroke="#fff" strokeWidth="3" />
        <path d="M16 14h19v12H16z" fill="#fff" stroke="#c90" /><circle cx="22" cy="22" r="8.500" fill="#f4b73a" stroke="#a86c10" /><path d="M17 18l5 5 6-5" fill="none" stroke="#fff" strokeWidth="2" />
      </svg>
    </Task>
    <Task label="Word" className="w-[66px]">
      <svg viewBox="0 0 34 32" className="h-8 w-8">
        <path d="M8 1h22v29H8z" fill="#f2f6fc" stroke="#2a5aa0" /><path d="M20 8h9M20 12h9M20 16h9M20 20h9M20 24h9" stroke="#5a86c8" strokeWidth="2" />
        <path d="M2 5l18-2v25L2 26z" fill="#e4edf9" stroke="#2a5aa0" /><path d="M5 10l3 11 3-9 3 9 3-12" fill="none" stroke="#1c4a98" strokeWidth="2.600" />
      </svg>
    </Task>
    <Task label="Chrome" className="w-[61px]">
      <svg viewBox="0 0 32 32" className="h-[30px] w-[30px]">
        <circle cx="16" cy="16" r="15" fill="#fbd02e" />
        <path d="M3 8.500A15 15 0 0 0 15 31l7-12H16z" fill="#36a648" />
        <path d="M3 8.500A15 15 0 0 1 29.500 9H16l-6 10z" fill="#e23c2e" />
        <circle cx="16" cy="16" r="7" fill="#fff" /><circle cx="16" cy="16" r="5.400" fill="#3a7fe0" />
      </svg>
    </Task>
    <Task label="Robot" open className="w-[59px]">
      <span className="relative flex h-8 w-8 items-start justify-center bg-[#eee4da]">
        <RobotMark className="h-[26px] w-[22px]" />
        <span className="absolute right-0 bottom-0 text-[6px] leading-[6px] font-bold text-gray-700">PRO</span>
      </span>
    </Task>
    <div className="ml-auto flex h-full items-center text-white">
      <svg viewBox="0 0 8 5" className="mr-4 h-[5px] w-2"><path d="M0 5h8L4 0z" fill="#fff" /></svg>
      <svg viewBox="0 0 16 16" className="mr-2 size-4"><path d="M2 1v15" stroke="#fff" strokeWidth="1.600" /><path d="M4 2h5l1 2h5l-2 3 2 3h-5l-1-2H4z" fill="#fff" /></svg>
      <svg viewBox="0 0 16 16" className="mr-2 size-4"><path d="M1 5h3l4-4v14l-4-4H1z" fill="#fff" /><path d="M10 5c2 2 2 4 0 6M12 3c3 3 3 7 0 10" fill="none" stroke="#fff" /></svg>
      <svg viewBox="0 0 16 16" className="mr-3.5 size-4"><path d="M5 4h10v8H5zM7 15h7M10 12v3" fill="none" stroke="#fff" strokeWidth="1.500" /><path d="M1 1v4h4V1M3 5v9h3" fill="none" stroke="#fff" strokeWidth="1.400" /></svg>
      <div className="w-[62px] text-center font-['Open_Sans','Noto_Sans',sans-serif] text-[11px] leading-[17px]">
        <p>02:17 PM</p>
        <p>2014/08/06</p>
      </div>
      <button aria-label="Show desktop" className="ml-3 h-full w-3 border border-[#7ea6cc] bg-white/15" />
    </div>
  </div>
);

const App = () => {
  return (
    <div className="relative flex h-screen flex-col overflow-hidden bg-[#f0f0f0] font-['Liberation_Sans',Arial,sans-serif] text-black">
      <svg className="absolute size-0" aria-hidden="true">
        <defs>
          <linearGradient id="paper" x1="0" y1="0" x2="1" y2="1">
            <stop offset=".3" stopColor="#fff" />
            <stop offset="1" stopColor="#9fd0ee" />
          </linearGradient>
        </defs>
      </svg>
      <TitleBar />
      <MenuBar />
      <button aria-label="Application menu" className="absolute top-0 left-0 z-20 flex h-[41px] w-[41px] flex-col items-center border border-black bg-gradient-to-b from-[#d8d8d8] to-[#8c8c8c] pt-0.5">
        <RobotMark className="h-7 w-6" />
        <span className="font-['Open_Sans',sans-serif] text-[8px] leading-[10px] font-semibold">PRO</span>
      </button>
      <Toolbars />
      <main className="flex min-h-0 flex-1">
        <Inspector />
        <Viewport />
        <SideTools />
      </main>
      <DocTabs />
      <StatusBar />
      <Taskbar />
    </div>
  );
};

export default App;
